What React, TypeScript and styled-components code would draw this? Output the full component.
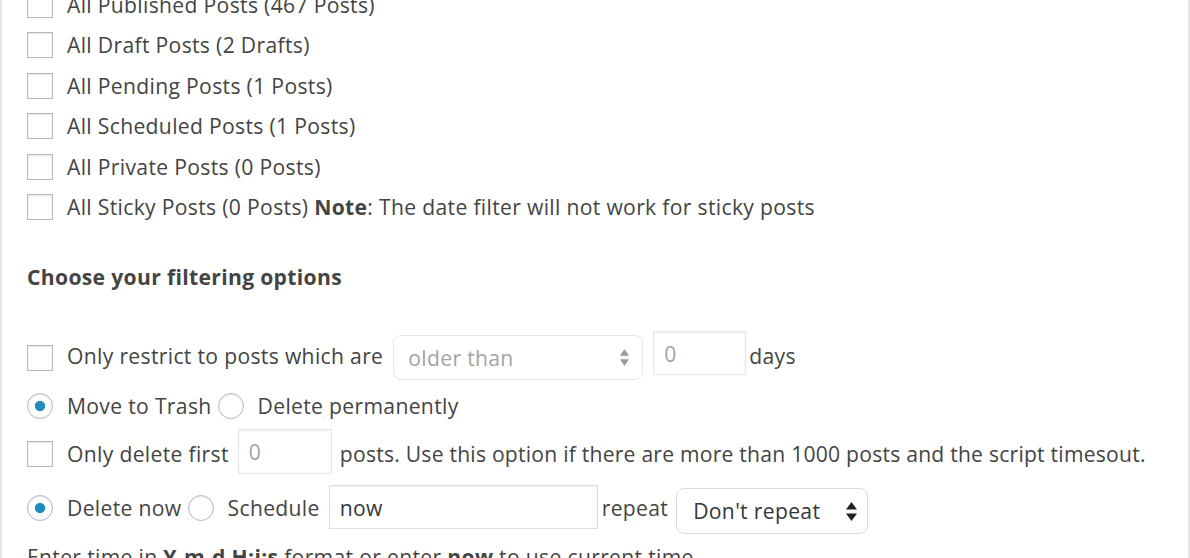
import React from 'react'
import styled, { createGlobalStyle } from 'styled-components'

const GlobalStyle = createGlobalStyle`
  html, body {
    margin: 0;
    padding: 0;
    background: #fff;
    overflow: hidden;
  }

  body {
    font-family: 'Open Sans', 'Noto Sans', sans-serif;
    font-size: 21.125px;
    letter-spacing: 0.33px;
    color: #444;
  }
`

const Panel = styled.div`
  box-sizing: border-box;
  height: 558px;
  overflow: hidden;
  padding-left: 25px;
  border-left: 2px solid #e5e5e5;
  border-right: 2px solid #e5e5e5;
`

const StatusList = styled.div`
  display: flex;
  flex-direction: column;
  margin-top: -15.75px;
`

const Row = styled.div<{ $h: number }>`
  display: flex;
  align-items: center;
  height: ${(p) => p.$h}px;
  white-space: nowrap;
  line-height: 32px;
`

const Heading = styled.h4`
  margin: 33.75px 0 0;
  font-size: 21.125px;
  font-weight: 700;
  line-height: 32px;
  color: #444;
`

const FilterList = styled.div`
  display: flex;
  flex-direction: column;
  margin-top: 38.5px;
`

const Check = styled.input<{ $round?: boolean; $lift?: number }>`
  appearance: none;
  box-sizing: border-box;
  flex: none;
  width: 26px;
  height: 26px;
  margin: ${(p) => (p.$lift && p.$lift < 0 ? -2 * p.$lift : 0)}px 14px
    ${(p) => (p.$lift && p.$lift > 0 ? 2 * p.$lift : 0)}px 0;
  border: 1.6px solid #b4b9be;
  border-radius: ${(p) => (p.$round ? '50%' : '0')};
  background: #fff;
  box-shadow: inset 0 1px 2px rgba(0, 0, 0, 0.1);

  &:checked {
    background: radial-gradient(circle, #1e8cbe 0 4.8px, #fff 5.4px);
  }
`

const Text = styled.span<{ $mr?: number; $tight?: boolean }>`
  margin-right: ${(p) => p.$mr ?? 0}px;
  letter-spacing: ${(p) => (p.$tight ? '0.23px' : 'inherit')};
`

const Field = styled.input<{ $w: number; $h: number; $ml: number; $mr: number; $lift?: number; $muted?: boolean }>`
  box-sizing: border-box;
  flex: none;
  width: ${(p) => p.$w}px;
  height: ${(p) => p.$h}px;
  margin: ${(p) => (p.$lift && p.$lift < 0 ? -2 * p.$lift : 0)}px ${(p) => p.$mr}px
    ${(p) => (p.$lift && p.$lift > 0 ? 2 * p.$lift : 0)}px ${(p) => p.$ml}px;
  padding: 0 10px;
  border: 1.6px solid ${(p) => (p.$muted ? '#e6e6e6' : '#dddddd')};
  border-radius: 0;
  box-shadow: inset 0 1px 2px rgba(0, 0, 0, 0.07);
  background: #fff;
  font-family: inherit;
  font-size: 21.125px;
  letter-spacing: inherit;
  color: ${(p) => (p.$muted ? '#a4a4a4' : '#32373c')};
  outline: none;
`

const Select = styled.div<{ $w: number; $h: number; $ml: number; $mr: number; $lift?: number; $muted?: boolean }>`
  box-sizing: border-box;
  flex: none;
  display: flex;
  align-items: center;
  justify-content: space-between;
  width: ${(p) => p.$w}px;
  height: ${(p) => p.$h}px;
  margin: ${(p) => (p.$lift && p.$lift < 0 ? -2 * p.$lift : 0)}px ${(p) => p.$mr}px
    ${(p) => (p.$lift && p.$lift > 0 ? 2 * p.$lift : 0)}px ${(p) => p.$ml}px;
  padding: 0 ${(p) => (p.$muted ? 13 : 10)}px 0 ${(p) => (p.$muted ? 14 : 16)}px;
  border: 1.6px solid ${(p) => (p.$muted ? '#e8e8e8' : '#dcdcdc')};
  border-radius: 8px;
  background: #fff;
  color: ${(p) => (p.$muted ? '#a4a4a4' : '#32373c')};
`

const Arrows = ({ color, w, h }: { color: string; w: number; h: number }) => (
  <svg width={w} height={h} viewBox="0 0 10 18" preserveAspectRatio="none">
    <path d="M5 0 L10 7.2 L0 7.2 Z" fill={color} />
    <path d="M0 10.8 L10 10.8 L5 18 Z" fill={color} />
  </svg>
)

const statuses = [
  'All Published Posts (467 Posts)',
  'All Draft Posts (2 Drafts)',
  'All Pending Posts (1 Posts)',
  'All Scheduled Posts (1 Posts)',
  'All Private Posts (0 Posts)',
]

export default function App() {
  return (
    <>
      <GlobalStyle />
      <Panel>
        <StatusList>
          {statuses.map((label) => (
            <Row key={label} $h={40.5}>
              <Check type="checkbox" readOnly />
              <Text>{label}</Text>
            </Row>
          ))}
          <Row $h={40.5}>
            <Check type="checkbox" readOnly />
            <Text>
              All Sticky Posts (0 Posts) <b>Note</b>: The date filter will not work for sticky posts
            </Text>
          </Row>
        </StatusList>

        <Heading>Choose your filtering options</Heading>

        <FilterList>
          <Row $h={48}>
            <Check type="checkbox" readOnly $lift={-2.5} />
            <Text>Only restrict to posts which are</Text>
            <Select $w={250} $h={45} $ml={10} $mr={0} $lift={-2} $muted>
              <span>older than</span>
              <Arrows color="#9a9a9a" w={9} h={17} />
            </Select>
            <Field readOnly value="0" $w={93} $h={44} $ml={10} $mr={3} $lift={2.5} $muted />
            <Text>days</Text>
          </Row>
          <Row $h={52}>
            <Check type="radio" name="trash" defaultChecked $round />
            <Text $mr={6}>Move to Trash</Text>
            <Check type="radio" name="trash" $round />
            <Text>Delete permanently</Text>
          </Row>
          <Row $h={44}>
            <Check type="checkbox" readOnly />
            <Text>Only delete first</Text>
            <Field readOnly value="0" $w={94} $h={45} $ml={9} $mr={8} $lift={2} $muted />
            <Text $tight>posts. Use this option if there are more than 1000 posts and the script timesout.</Text>
          </Row>
          <Row $h={65}>
            <Check type="radio" name="when" defaultChecked $round />
            <Text $mr={6}>Delete now</Text>
            <Check type="radio" name="when" $round />
            <Text>Schedule</Text>
            <Field readOnly value="now" $w={269} $h={44} $ml={9} $mr={4} $lift={1} />
            <Text>repeat</Text>
            <Select $w={192} $h={46} $ml={8} $mr={0} $lift={-3}>
              <span>Don't repeat</span>
              <Arrows color="#222" w={11} h={19} />
            </Select>
          </Row>
          <Row $h={32}>
            <Text>
              Enter time in <b>Y-m-d H:i:s</b> format or enter <b>now</b> to use current time.
            </Text>
          </Row>
        </FilterList>
      </Panel>
    </>
  )
}
